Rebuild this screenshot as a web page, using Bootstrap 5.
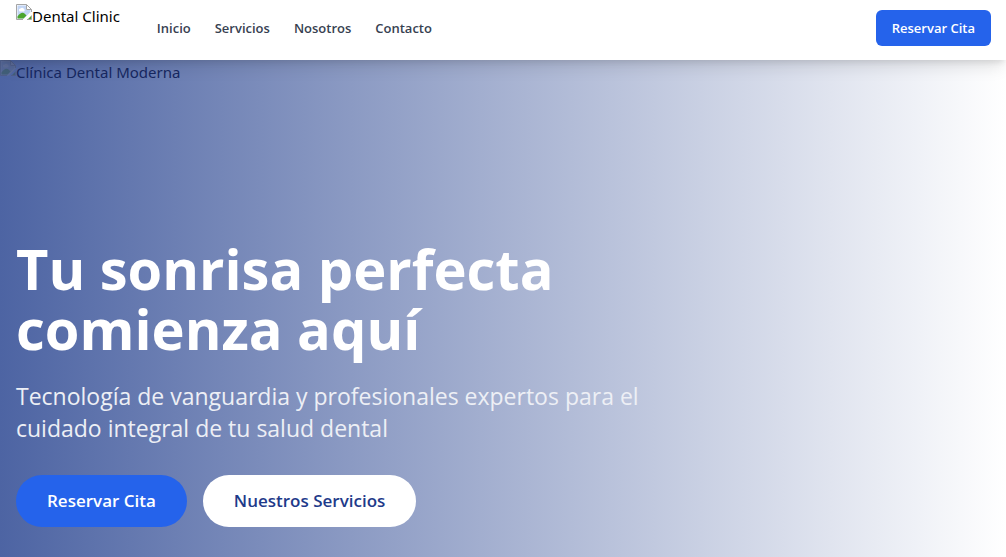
<!DOCTYPE html>
<html lang="es">
<head>
<meta charset="utf-8">
<meta name="viewport" content="width=device-width, initial-scale=1">
<title>Dental Clinic</title>
<link href="https://cdn.jsdelivr.net/npm/bootstrap@5.3.0/dist/css/bootstrap.min.css" rel="stylesheet">
<style>
  body { font-family: "Open Sans", "Noto Sans", sans-serif; color: #000; }
  .site-bar { min-height: 60px; padding: 0 15px 4px 16px; box-shadow: 0 10px 15px -3px rgba(0,0,0,.1), 0 4px 6px -2px rgba(0,0,0,.1); z-index: 2; }
  .alt-label { font-family: "Noto Sans", sans-serif; font-size: 15px; line-height: 24px; color: #000; }
  .alt-label svg { flex: none; width: 16px; height: 16px; }
  .main-menu { gap: 24px; margin-left: 37px; }
  .main-menu a { font-weight: 600; font-size: 13px; line-height: 20px; color: #374151; }
  .btn-brand, .btn-brand:hover { background: #2563eb; color: #fff; }
  .btn-book { font-weight: 600; font-size: 13px; line-height: 20px; padding: 8px 16px; border: 0; border-radius: 6px; }
  .hero { background: linear-gradient(90deg, #4d64a3, #fff); }
  .photo-alt { color: #172861; }
  .photo-alt svg { filter: brightness(.5); opacity: .3; }
  .hero-copy { padding: 0 16px 30px; }
  .hero-copy h1 { font-weight: 700; font-size: 56px; line-height: 60px; color: #fff; max-width: 672px; margin-bottom: 22px; }
  .intro { font-size: 23px; line-height: 32px; color: #edeff5; max-width: 640px; margin-bottom: 31px; }
  .btn-hero { font-weight: 600; font-size: 17px; line-height: 28px; padding: 12px 31px; border: 0; }
  .btn-plain, .btn-plain:hover { background: #fff; color: #1e3a8a; }
</style>
</head>
<body>
<svg class="d-none" aria-hidden="true">
  <symbol id="missing-image" viewBox="0 0 16 16">
    <path d="M.5.5h10l5 5v3L9 15.500H.5z" fill="#fff"/>
    <path d="M1.500 1.500H10V6h4.500v2L8 14.500H1.500z" fill="#c2d5f5"/>
    <path d="M3 6.500a1.500 1.500 0 0 1 1.500-2 2 2 0 0 1 3.500.5 1.500 1.500 0 0 1 0 2.500H3.500z" fill="#fff"/>
    <path d="M1.500 14.500v-2C4 9 6.500 8 8.500 9.500l2 2-3 3zM12 15l3-3v3z" fill="#4ba52f"/>
    <path d="M7 15.500H.5V.5h10l5 5V8M10.500.5v5h5M15.500 11.500v4H11" fill="none" stroke="#a5a5a5"/>
  </symbol>
</svg>
<div class="d-flex flex-column min-vh-100">
  <header class="site-bar d-flex align-items-center bg-white position-relative">
    <a class="alt-label d-flex align-items-start align-self-start text-decoration-none pt-1" href="#">
      <svg aria-hidden="true"><use href="#missing-image"/></svg><span>Dental Clinic</span>
    </a>
    <nav class="main-menu d-flex">
      <a class="text-decoration-none" href="#">Inicio</a>
      <a class="text-decoration-none" href="#">Servicios</a>
      <a class="text-decoration-none" href="#">Nosotros</a>
      <a class="text-decoration-none" href="#">Contacto</a>
    </nav>
    <button type="button" class="btn btn-brand btn-book ms-auto">Reservar Cita</button>
  </header>
  <main class="hero d-flex flex-column flex-grow-1">
    <div class="alt-label photo-alt d-flex align-items-start">
      <svg aria-hidden="true"><use href="#missing-image"/></svg><span>Clínica Dental Moderna</span>
    </div>
    <section class="hero-copy mt-auto">
      <h1>Tu sonrisa perfecta<br>comienza aquí</h1>
      <p class="intro">Tecnología de vanguardia y profesionales expertos para el cuidado integral de tu salud dental</p>
      <div class="d-flex flex-wrap gap-3">
        <button type="button" class="btn btn-brand btn-hero rounded-pill">Reservar Cita</button>
        <button type="button" class="btn btn-plain btn-hero rounded-pill">Nuestros Servicios</button>
      </div>
    </section>
  </main>
</div>
<script src="https://cdn.jsdelivr.net/npm/bootstrap@5.3.0/dist/js/bootstrap.bundle.min.js"></script>
</body>
</html>
